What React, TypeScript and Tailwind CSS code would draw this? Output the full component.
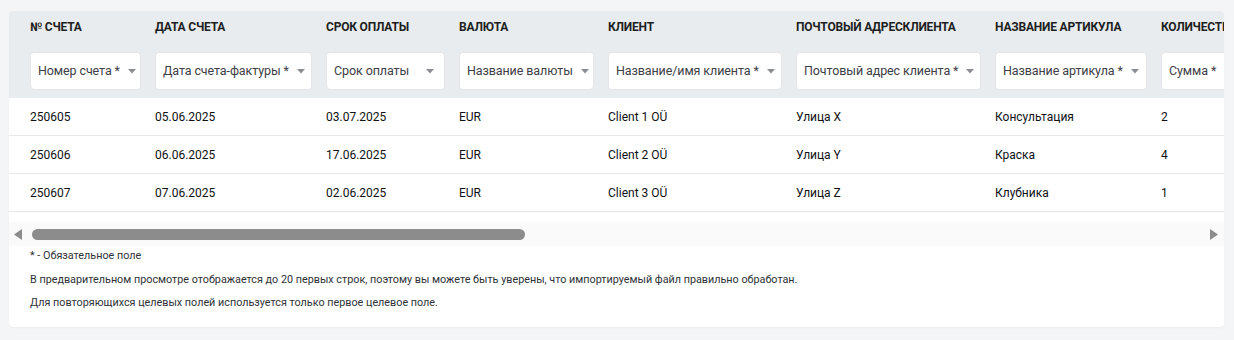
type Column = {
  title: string;
  target: string;
  width: number;
};

const columns: Column[] = [
  { title: '№ счета', target: 'Номер счета *', width: 125 },
  { title: 'Дата счета', target: 'Дата счета-фактуры *', width: 171 },
  { title: 'Срок оплаты', target: 'Срок оплаты', width: 133 },
  { title: 'Валюта', target: 'Название валюты', width: 149 },
  { title: 'Клиент', target: 'Название/имя клиента *', width: 188 },
  { title: 'Почтовый адресклиента', target: 'Почтовый адрес клиента *', width: 199 },
  { title: 'Название артикула', target: 'Название артикула *', width: 166 },
  { title: 'Количество', target: 'Сумма *', width: 160 },
];

const rows: string[][] = [
  ['250605', '05.06.2025', '03.07.2025', 'EUR', 'Client 1 OÜ', 'Улица X', 'Консультация', '2'],
  ['250606', '06.06.2025', '17.06.2025', 'EUR', 'Client 2 OÜ', 'Улица Y', 'Краска', '4'],
  ['250607', '07.06.2025', '02.06.2025', 'EUR', 'Client 3 OÜ', 'Улица Z', 'Клубника', '1'],
];

function TargetSelect({ label }: { label: string }) {
  return (
    <div className="flex h-[38px] w-full items-center justify-between rounded-[4px] border border-[#e3e5e8] bg-white pl-[7px] pr-[10px] text-[12.5px] text-[#3d4046]">
      <span className="whitespace-nowrap tracking-[-0.1px]">{label}</span>
      <svg width="8" height="5" viewBox="0 0 8 5" className="ml-2 shrink-0">
        <path d="M0 0 H8 L4 4.5 Z" fill="#8a8d92" />
      </svg>
    </div>
  );
}

function ScrollBar() {
  return (
    <div className="flex h-[24px] items-center bg-[#fafafa] pl-[5px] pr-[6px]">
      <svg width="9" height="11" viewBox="0 0 9 11">
        <path d="M8 0 V11 L0 5.5 Z" fill="#8c8c8c" />
      </svg>
      <div className="ml-[9px] h-[11px] w-[493px] rounded-full bg-[#8c8c8c]" />
      <div className="flex-1" />
      <svg width="9" height="11" viewBox="0 0 9 11">
        <path d="M1 0 V11 L9 5.5 Z" fill="#8c8c8c" />
      </svg>
    </div>
  );
}

export default function App() {
  return (
    <div
      className="h-[340px] w-[1234px] overflow-hidden bg-[#f4f5f7] pl-[9px] pr-[10px] pt-[11px]"
      style={{ fontFamily: 'Roboto, "Noto Sans", sans-serif' }}
    >
      <div className="overflow-hidden rounded-[4px] bg-white pb-[12px] shadow-[0_1px_2px_rgba(0,0,0,0.04)]">
        <div className="overflow-hidden">
          <div className="w-max">
            <div className="flex bg-[#e9ecee] pb-[8px] pl-[21px]">
              {columns.map((c) => (
                <div key={c.title} className="shrink-0 pr-[14px]" style={{ width: c.width }}>
                  <div className="flex h-[32px] items-center whitespace-nowrap text-[12px] font-bold uppercase tracking-[-0.2px] text-[#1d1f22]">
                    {c.title}
                  </div>
                  <div className="mt-[9px]">
                    <TargetSelect label={c.target} />
                  </div>
                </div>
              ))}
            </div>
            {rows.map((r, i) => (
              <div key={i} className="flex h-[38px] items-center border-b border-[#e6e7e9] pl-[21px]">
                {r.map((v, j) => (
                  <div
                    key={j}
                    className="shrink-0 whitespace-nowrap pr-[14px] text-[12px] font-normal text-[#0f1113]"
                    style={{ width: columns[j].width }}
                  >
                    {v}
                  </div>
                ))}
              </div>
            ))}
          </div>
        </div>
        <div className="mt-[10px]">
          <ScrollBar />
        </div>
        <div className="-mt-[2px] pl-[21px] text-[10.8px] leading-[23.5px] text-[#2f3237]">
          <p>* - Обязательное поле</p>
          <p>
            В предварительном просмотре отображается до 20 первых строк, поэтому вы можете быть уверены, что
            импортируемый файл правильно обработан.
          </p>
          <p>Для повторяющихся целевых полей используется только первое целевое поле.</p>
        </div>
      </div>
    </div>
  );
}
